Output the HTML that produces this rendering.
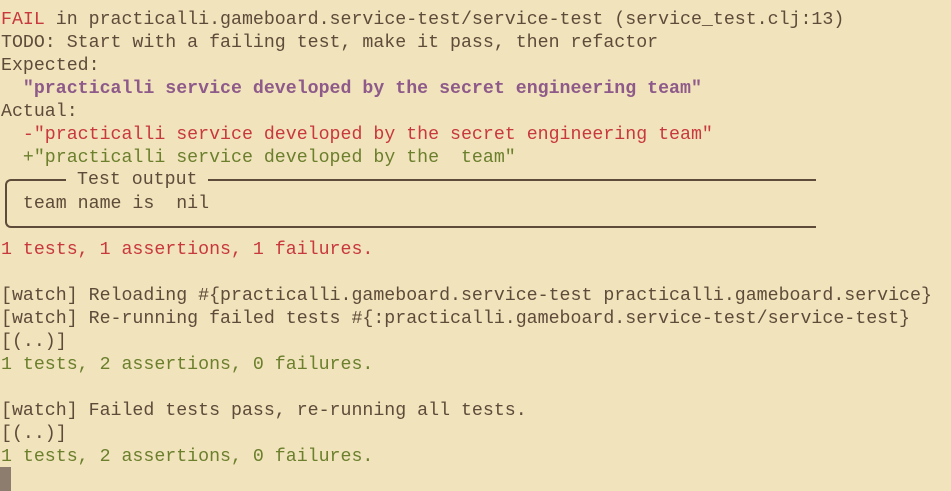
<!DOCTYPE html>
<html><head><meta charset="utf-8"><style>
html,body{margin:0;padding:0;background:#f1e3bb;width:951px;height:491px;overflow:hidden}
pre{margin:0;padding:9px 0 0 1px;font-family:"Liberation Mono",monospace;font-size:18.25px;line-height:23px;color:#5f4b3a;white-space:pre}
.r{color:#c8383f}.g{color:#6b7f2d}.p{color:#8e5a8a;font-weight:bold}
.box{position:absolute;left:5px;top:179px;width:809px;height:45px;border:2px solid #5f4b3a;border-right:none;border-radius:6px 0 0 6px}
.lbl{position:absolute;left:66px;top:171px;background:#f1e3bb;padding:0 11px;font-family:"Liberation Mono",monospace;font-size:18.25px;line-height:18px;color:#5f4b3a}
.cur{position:absolute;left:0;top:467px;width:11px;height:24px;background:#8c7d6e}
</style></head><body>
<div class="box"></div>
<pre><span class="r">FAIL</span> in practicalli.gameboard.service-test/service-test (service_test.clj:13)
TODO: Start with a failing test, make it pass, then refactor
Expected:
  <span class="p">"practicalli service developed by the secret engineering team"</span>
Actual:
  <span class="r">-"practicalli service developed by the secret engineering team"</span>
  <span class="g">+"practicalli service developed by the  team"</span>

  team name is  nil

<span class="r">1 tests, 1 assertions, 1 failures.</span>

[watch] Reloading #{practicalli.gameboard.service-test practicalli.gameboard.service}
[watch] Re-running failed tests #{:practicalli.gameboard.service-test/service-test}
[(..)]
<span class="g">1 tests, 2 assertions, 0 failures.</span>

[watch] Failed tests pass, re-running all tests.
[(..)]
<span class="g">1 tests, 2 assertions, 0 failures.</span></pre>
<div class="lbl">Test output</div>
<div class="cur"></div>
</body></html>
